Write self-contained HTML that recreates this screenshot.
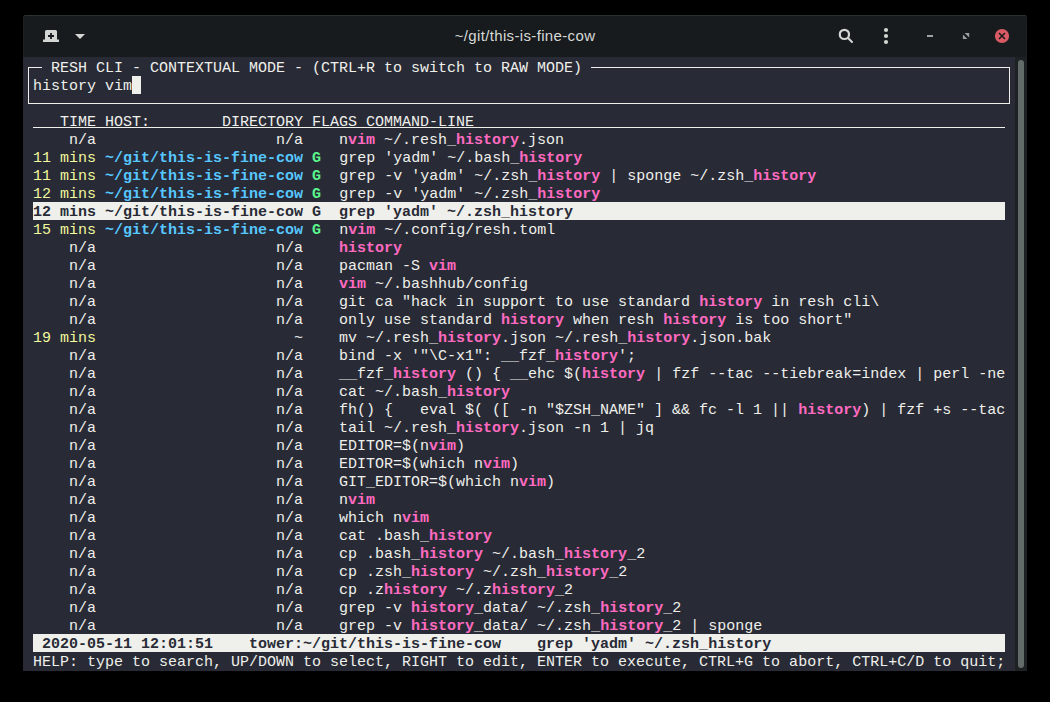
<!DOCTYPE html>
<html><head><meta charset="utf-8"><style>
*{margin:0;padding:0;box-sizing:border-box}
html,body{width:1050px;height:702px;background:#000;overflow:hidden}
#win{position:absolute;left:23px;top:15px;width:1004px;height:656px;background:#171b1d;border-radius:3px 3px 0 0;box-shadow:inset 1px 0 0 #1d2123,inset -1px 0 0 #1d2123;overflow:hidden}
#topb{position:absolute;left:0;top:0;width:1004px;height:1px;background:#2b3033}
#term{position:absolute;left:23px;top:57px;width:992px;height:614px;background:#282a36}
#sb{position:absolute;left:1015px;top:57px;width:12px;height:614px;background:#1d2123}
#thumb{position:absolute;left:1018px;top:60px;width:6px;height:608px;background:#626b68;border-radius:3px}
.t{position:absolute;left:24px;height:18px;line-height:18px;padding-top:2px;font-family:"Liberation Mono",monospace;font-size:15px;white-space:pre;color:#eff0eb}
.y{color:#f3f99d}
.bl{color:#57c7ff;font-weight:bold}
.g{color:#5af78e;font-weight:bold}
.m{color:#ff6ac1;font-weight:bold}
.u{text-decoration:underline;text-underline-offset:2px}
.sel{background:#eff0eb;color:#282a36;font-weight:bold;display:inline-block;height:18px;margin-top:-2px;padding-top:2px}
.ln{position:absolute;background:#eff0eb}
.ttl{position:absolute;left:0;top:15px;width:1050px;text-align:center;font-family:"Liberation Sans",sans-serif;font-size:15px;letter-spacing:0.35px;color:#d6d9d6;line-height:42px}
</style></head><body>

<div id="win"><div id="topb"></div></div>
<div class="ttl">~/git/this-is-fine-cow</div>
<svg style="position:absolute;left:0;top:0" width="1050" height="60" viewBox="0 0 1050 60">
 <g fill="#d3d6d3">
  <path d="M45 31.5 Q45 30 46.5 30 L55.5 30 Q57 30 57 31.5 L57 39.5 L59 39.5 L59 42 L43 42 L43 39.5 L45 39.5 Z"/>
  <path d="M75 34 L85 34 L80 39 Z"/>
  <circle cx="886" cy="30" r="2.1"/><circle cx="886" cy="36" r="2.1"/><circle cx="886" cy="42" r="2.1"/>
 </g>
 <path d="M48 36 H54 M51 33 V39" stroke="#171b1d" stroke-width="1.8"/>
 <circle cx="844.4" cy="34.4" r="4.6" fill="none" stroke="#d3d6d3" stroke-width="2.2"/>
 <path d="M848 38 L852 42" stroke="#d3d6d3" stroke-width="2" stroke-linecap="round"/>
 <rect x="927" y="35" width="6" height="2" fill="#9ea2a6"/>
 <path d="M964.6 33 L969.2 33 L969.2 37.6 Z M962.9 34.6 L962.9 39 L967.3 39 Z" fill="#9b9fa3"/>
 <circle cx="1002" cy="36" r="7.1" fill="#d95b65"/>
 <path d="M999 33 L1005 39 M1005 33 L999 39" stroke="#1a1a1a" stroke-width="1.6"/>
</svg>

<div id="term"></div><div id="sb"></div><div id="thumb"></div>

<div class="ln" style="left:28px;top:67px;width:1px;height:37px"></div>
<div class="ln" style="left:1009px;top:67px;width:1px;height:37px"></div>
<div class="ln" style="left:28px;top:67px;width:14px;height:1px"></div>
<div class="ln" style="left:591px;top:67px;width:419px;height:1px"></div>
<div class="ln" style="left:28px;top:103px;width:982px;height:1px"></div>
<div class="t" style="top:58px"><span style="padding-left:18px"> RESH CLI - CONTEXTUAL MODE - (CTRL+R to switch to RAW MODE) </span></div>
<div style="position:absolute;left:132px;top:76px;width:9px;height:18px;background:#eff0eb"></div>

<div class="t" style="top:76px"> history vim</div>
<div class="t" style="top:112px">    TIME HOST:        DIRECTORY FLAGS COMMAND-LINE                                                           </div>
<div class="ln" style="left:33px;top:127px;width:972px;height:1px"></div>
<div class="t" style="top:130px">     n/a                    n/a    n<b class="m">vim</b> ~/.resh_<b class="m">history</b>.json</div>
<div class="t" style="top:148px"> <span class="y">11 mins</span> <b class="bl">~/git/this-is-fine-cow</b> <b class="g">G</b>  grep &#x27;yadm&#x27; ~/.bash_<b class="m">history</b></div>
<div class="t" style="top:166px"> <span class="y">11 mins</span> <b class="bl">~/git/this-is-fine-cow</b> <b class="g">G</b>  grep -v &#x27;yadm&#x27; ~/.zsh_<b class="m">history</b> | sponge ~/.zsh_<b class="m">history</b></div>
<div class="t" style="top:184px"> <span class="y">12 mins</span> <b class="bl">~/git/this-is-fine-cow</b> <b class="g">G</b>  grep -v &#x27;yadm&#x27; ~/.zsh_<b class="m">history</b></div>
<div class="t" style="top:202px"> <b class="sel">12 mins ~/git/this-is-fine-cow G  grep &#x27;yadm&#x27; ~/.zsh_history                                                </b></div>
<div class="t" style="top:220px"> <span class="y">15 mins</span> <b class="bl">~/git/this-is-fine-cow</b> <b class="g">G</b>  n<b class="m">vim</b> ~/.config/resh.toml</div>
<div class="t" style="top:238px">     n/a                    n/a    <b class="m">history</b></div>
<div class="t" style="top:256px">     n/a                    n/a    pacman -S <b class="m">vim</b></div>
<div class="t" style="top:274px">     n/a                    n/a    <b class="m">vim</b> ~/.bashhub/config</div>
<div class="t" style="top:292px">     n/a                    n/a    git ca &quot;hack in support to use standard <b class="m">history</b> in resh cli\</div>
<div class="t" style="top:310px">     n/a                    n/a    only use standard <b class="m">history</b> when resh <b class="m">history</b> is too short&quot;</div>
<div class="t" style="top:328px"> <span class="y">19 mins</span>                      ~    mv ~/.resh_<b class="m">history</b>.json ~/.resh_<b class="m">history</b>.json.bak</div>
<div class="t" style="top:346px">     n/a                    n/a    bind -x &#x27;&quot;\C-x1&quot;: __fzf_<b class="m">history</b>&#x27;;</div>
<div class="t" style="top:364px">     n/a                    n/a    __fzf_<b class="m">history</b> () { __ehc $(<b class="m">history</b> | fzf --tac --tiebreak=index | perl -ne</div>
<div class="t" style="top:382px">     n/a                    n/a    cat ~/.bash_<b class="m">history</b></div>
<div class="t" style="top:400px">     n/a                    n/a    fh() {   eval $( ([ -n &quot;$ZSH_NAME&quot; ] &amp;&amp; fc -l 1 || <b class="m">history</b>) | fzf +s --tac</div>
<div class="t" style="top:418px">     n/a                    n/a    tail ~/.resh_<b class="m">history</b>.json -n 1 | jq</div>
<div class="t" style="top:436px">     n/a                    n/a    EDITOR=$(n<b class="m">vim</b>)</div>
<div class="t" style="top:454px">     n/a                    n/a    EDITOR=$(which n<b class="m">vim</b>)</div>
<div class="t" style="top:472px">     n/a                    n/a    GIT_EDITOR=$(which n<b class="m">vim</b>)</div>
<div class="t" style="top:490px">     n/a                    n/a    n<b class="m">vim</b></div>
<div class="t" style="top:508px">     n/a                    n/a    which n<b class="m">vim</b></div>
<div class="t" style="top:526px">     n/a                    n/a    cat .bash_<b class="m">history</b></div>
<div class="t" style="top:544px">     n/a                    n/a    cp .bash_<b class="m">history</b> ~/.bash_<b class="m">history</b>_2</div>
<div class="t" style="top:562px">     n/a                    n/a    cp .zsh_<b class="m">history</b> ~/.zsh_<b class="m">history</b>_2</div>
<div class="t" style="top:580px">     n/a                    n/a    cp .z<b class="m">history</b> ~/.z<b class="m">history</b>_2</div>
<div class="t" style="top:598px">     n/a                    n/a    grep -v <b class="m">history</b>_data/ ~/.zsh_<b class="m">history</b>_2</div>
<div class="t" style="top:616px">     n/a                    n/a    grep -v <b class="m">history</b>_data/ ~/.zsh_<b class="m">history</b>_2 | sponge</div>
<div class="t" style="top:634px"> <b class="sel"> 2020-05-11 12:01:51    tower:~/git/this-is-fine-cow    grep &#x27;yadm&#x27; ~/.zsh_history                          </b></div>
<div class="t" style="top:652px"> HELP: type to search, UP/DOWN to select, RIGHT to edit, ENTER to execute, CTRL+G to abort, CTRL+C/D to quit;</div>
</body></html>
